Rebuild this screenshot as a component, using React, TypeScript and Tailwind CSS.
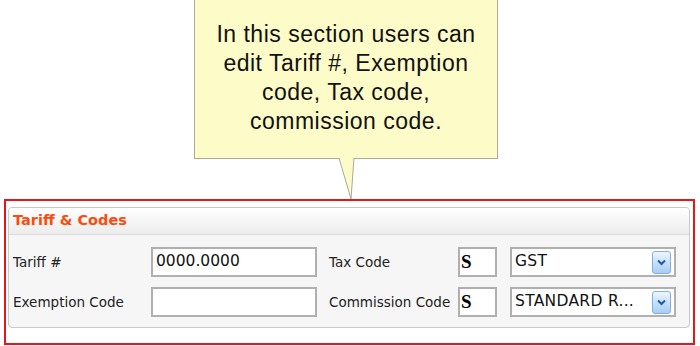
const Chevron = () => (
  <div className="w-[19px] h-[23px] rounded-[3px] border border-[#7fb0e3] bg-gradient-to-b from-[#eef6fe] via-[#c8e1fa] to-[#a9cdf3] flex items-center justify-center">
    <svg width="9" height="7" viewBox="0 0 9 7">
      <path d="M1 1.5 L4.5 5 L8 1.5" fill="none" stroke="#1f5aa8" strokeWidth="2" />
    </svg>
  </div>
);

const Field = ({ value, className = "" }: { value?: string; className?: string }) => (
  <div
    className={`h-[30px] border-2 border-[#b0b0b0] bg-white flex items-center px-[3px] text-[15.5px] text-[#111] ${className}`}
  >
    {value}
  </div>
);

const CodeBox = () => (
  <div className="h-[30px] w-[39px] border-2 border-[#b0b0b0] bg-white flex items-center pl-[1px] text-[19px] font-bold text-black font-['Liberation_Serif',serif]">
    S
  </div>
);

const Select = ({ value }: { value: string }) => (
  <div className="h-[30px] w-[166px] border-2 border-[#b0b0b0] bg-white flex items-center justify-between pl-[3px] pr-[3px] text-[15.5px] text-[#111]">
    <span className="tracking-[0.3px]">{value}</span>
    <Chevron />
  </div>
);

export default function App() {
  return (
    <div className="w-[700px] h-[346px] bg-white font-['DejaVu_Sans',sans-serif] overflow-hidden">
      <div className="relative ml-[194px] w-[304px] h-[159px] bg-[#fdfcc9] border border-t-0 border-[#aaa99a] flex items-center justify-center text-center font-['Liberation_Sans',Arial,sans-serif] text-[23px] leading-[29px] tracking-[0.5px] text-[#111]">
        <p className="-mt-[2px]">
          In this section users can
          <br />
          edit Tariff #, Exemption
          <br />
          code, Tax code,
          <br />
          commission code.
        </p>
        <svg
          className="absolute left-[143px] top-[157px]"
          width="18"
          height="44"
          viewBox="0 0 18 44"
        >
          <polygon points="1,0 16,0 13,42" fill="#fdfcc9" />
          <polyline points="1,1 13,42 16,1" fill="none" stroke="#aaa99a" strokeWidth="1" />
        </svg>
      </div>
      <div className="mt-[40px] ml-[4px] w-[691px] h-[146px] border-2 border-[#e8161b] bg-white">
        <div className="mt-[6px] ml-[2px] mr-[3px] h-[121px] rounded-[4px] border border-[#c9c9c9] bg-[#f6f6f6] overflow-hidden">
          <div className="h-[27px] border-b border-[#dadada] bg-gradient-to-b from-white to-[#ececec] flex items-center pl-[4px] text-[14.5px] font-bold text-[#fa4c0e]">
            Tariff &amp; Codes
          </div>
          <div className="pt-[12px] pl-[4px] grid grid-cols-[138px_166px_141px_52px_166px] gap-y-[10px] items-center text-[13.5px] text-[#222]">
            <span>Tariff #</span>
            <Field value="0000.0000" />
            <span className="pl-[12px]">Tax Code</span>
            <CodeBox />
            <Select value="GST" />
            <span>Exemption Code</span>
            <Field />
            <span className="pl-[12px]">Commission Code</span>
            <CodeBox />
            <Select value="STANDARD R..." />
          </div>
        </div>
      </div>
    </div>
  );
}
